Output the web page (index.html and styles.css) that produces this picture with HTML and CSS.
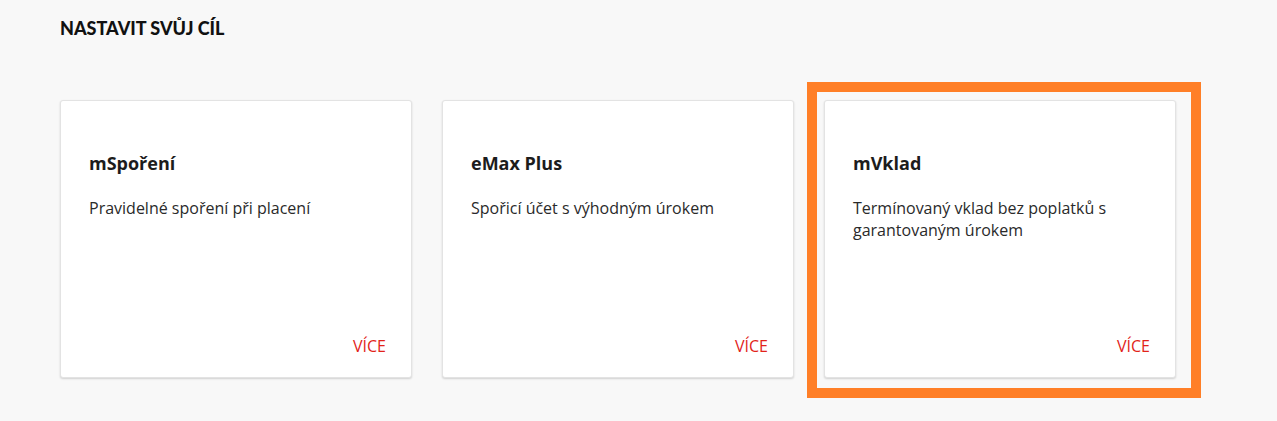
FILE: index.html
```html
<!DOCTYPE html>
<html lang="cs">
<head>
<meta charset="utf-8">
<title>Nastavit svůj cíl</title>
<link rel="stylesheet" href="styles.css">
</head>
<body>
<section class="goals">
  <h2 class="goals-title">NASTAVIT SVŮJ CÍL</h2>
  <div class="cards">
    <article class="card">
      <h3 class="card-title">mSpoření</h3>
      <p class="card-desc">Pravidelné spoření při placení</p>
      <a class="card-more" href="#">VÍCE</a>
    </article>
    <article class="card">
      <h3 class="card-title">eMax Plus</h3>
      <p class="card-desc">Spořicí účet s výhodným úrokem</p>
      <a class="card-more" href="#">VÍCE</a>
    </article>
    <article class="card card-highlight">
      <h3 class="card-title">mVklad</h3>
      <p class="card-desc">Termínovaný vklad bez poplatků s garantovaným úrokem</p>
      <a class="card-more" href="#">VÍCE</a>
      <span class="highlight-frame"></span>
    </article>
  </div>
</section>
</body>
</html>
```

FILE: styles.css
```css
html, body {
  margin: 0;
  padding: 0;
  background: #f8f8f8;
}

body {
  min-height: 421px;
  font-family: "Open Sans", "Noto Sans", sans-serif;
  color: #222;
}

.goals {
  padding: 18px 60px 43px 60px;
}

.goals-title {
  margin: 0;
  font-family: "Lato", "Liberation Sans", sans-serif;
  font-weight: 900;
  font-size: 18px;
  line-height: 20px;
  color: #111;
}

.cards {
  display: flex;
  gap: 30px;
  margin-top: 62px;
}

.card {
  position: relative;
  box-sizing: border-box;
  width: 352px;
  height: 278px;
  background: #fff;
  border: 1px solid #e3e3e3;
  border-radius: 3px;
  box-shadow: 0 1px 2px rgba(0, 0, 0, 0.16);
  padding: 50px 25px 21px 28px;
  display: flex;
  flex-direction: column;
}

.card-title {
  margin: 0;
  font-size: 18px;
  line-height: 24px;
  font-weight: 700;
  color: #1c1c1c;
}

.card-desc {
  margin: 22px 0 0 0;
  font-size: 16px;
  line-height: 22px;
  color: #2a2a2a;
  max-width: 290px;
}

.card-more {
  margin-top: auto;
  align-self: flex-end;
  font-size: 16px;
  line-height: 20px;
  color: #e2231a;
  text-decoration: none;
}

.highlight-frame {
  position: absolute;
  left: -18px;
  top: -19px;
  width: 394px;
  height: 316px;
  box-sizing: border-box;
  border: 10px solid #ff7f27;
  pointer-events: none;
}
```
